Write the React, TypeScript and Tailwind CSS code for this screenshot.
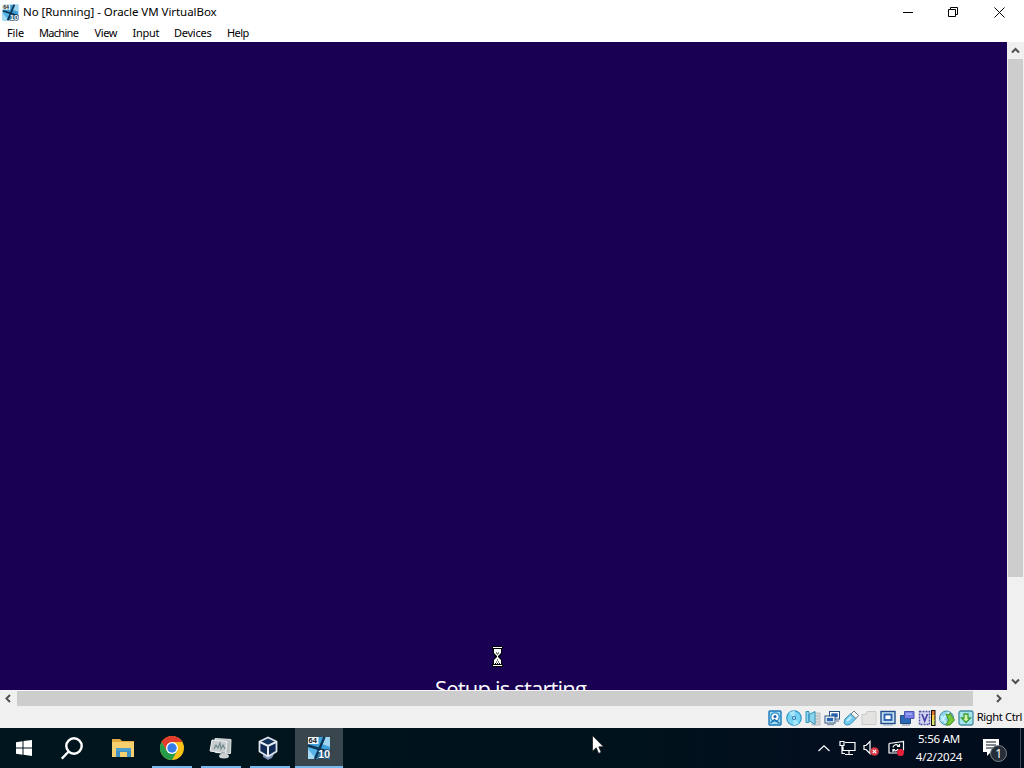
import React from 'react';

const menuItems = [
  { label: 'File', box: 'w-[32px] tracking-[-0.1px]' },
  { label: 'Machine', box: 'w-[55.5px] tracking-[-0.7px]' },
  { label: 'View', box: 'w-[38px] tracking-[-0.4px]' },
  { label: 'Input', box: 'w-[41.5px] tracking-[-0.3px]' },
  { label: 'Devices', box: 'w-[53px] tracking-[-0.25px]' },
  { label: 'Help', box: 'w-[40px] tracking-[-0.55px]' },
];

const VmIcon = ({ size }: { size: number }) => (
  <svg width={size} height={size} viewBox="0 0 24 24" className="shrink-0">
    <rect x="1" y="1" width="22" height="22" fill="#3d9ed8" />
    <path d="M1 11l10 3-4 9H1z" fill="#58b4e6" />
    <path d="M1 13l8 10H1z" fill="#a5dbf5" />
    <path d="M17 1h6v10l-8-3z" fill="#9fd4ee" />
    <path d="M17.5 1L8 23M1 9.5l22 7" stroke="#0d3353" strokeWidth="2.4" fill="none" />
    <rect x="1" y="1" width="10.5" height="7" fill="#eef3f4" />
    <text x="1.6" y="7.3" fontSize="7.5" fontWeight="700" fontFamily="Liberation Sans" fill="#172127">64</text>
    <text x="11" y="22" fontSize="11" fontWeight="700" fontFamily="Liberation Sans" fill="#fff" stroke="#173b55" strokeWidth="1.6" paintOrder="stroke">10</text>
  </svg>
);

const Chevron = ({ d }: { d: string }) => (
  <svg width="9" height="9" viewBox="0 0 9 9" fill="none" stroke="#505050" strokeWidth="2">
    <path d={d} />
  </svg>
);

const StatusIcons = () => (
  <>
    {/* Hard disk */}
    <svg width="16" height="16" viewBox="0 0 16 16">
      <rect x="2" y="1" width="12" height="14" rx="1" fill="#9edcf6" stroke="#1877b7" strokeWidth="1.4" />
      <circle cx="8" cy="7" r="4.2" fill="#fff" stroke="#2a8fca" strokeWidth="1.3" />
      <circle cx="8" cy="6.5" r="1.5" fill="#1c5fae" />
      <path d="M3.5 13l4-3.5 5 4" stroke="#1764a5" strokeWidth="1.3" fill="none" />
    </svg>
    {/* Optical disc */}
    <svg width="16" height="16" viewBox="0 0 16 16">
      <circle cx="8" cy="8" r="7.2" fill="#78d4f5" stroke="#2d95c5" strokeWidth="1.2" />
      <path d="M8 8L3 3a7 7 0 0 1 6-2zM8 8l5 5a7 7 0 0 1-6 2z" fill="#a8e7fa" />
      <circle cx="8" cy="8" r="1.5" fill="#fff" stroke="#2475b0" strokeWidth="1.2" />
    </svg>
    {/* Audio */}
    <svg width="16" height="16" viewBox="0 0 16 16">
      <path d="M8 3h7v12H7z" fill="#dadcdd" stroke="#b9bcbe" />
      <path d="M10 6h4M10 9h4M10 12h4" stroke="#b5b9bb" />
      <path d="M1 1.5h3v11H1zM4 4.5l6-3v13l-6-4z" fill="#8bd5ee" stroke="#3292b9" />
    </svg>
    {/* Network */}
    <svg width="16" height="16" viewBox="0 0 16 16">
      <rect x="5.5" y="1.5" width="10" height="7.5" fill="#fff" stroke="#24517e" />
      <rect x="7.3" y="3.3" width="6.4" height="4" fill="#2663b0" />
      <rect x="1" y="6" width="10" height="7" fill="#fff" stroke="#24517e" />
      <rect x="2.8" y="7.8" width="6.4" height="3.5" fill="#2663b0" />
      <path d="M3 14.5h7M12 11h3" stroke="#8597a8" strokeWidth="1.3" />
    </svg>
    {/* USB */}
    <svg width="16" height="16" viewBox="0 0 16 16">
      <path d="M8 3.5l5 5-6 6-4 .5L1 13l1-4z" fill="#72c9ee" stroke="#318fbd" />
      <path d="M8 4l3-3 4.5 4.5L13 8.5z" fill="#f0f5f5" stroke="#697d86" />
      <path d="M4 11l4-4" stroke="#c4effa" strokeWidth="2.2" />
    </svg>
    {/* Shared folders */}
    <svg width="16" height="16" viewBox="0 0 16 16">
      <path d="M1 14.5v-10h4l1-3h9v13z" fill="#e4e3e2" stroke="#cac9c8" />
    </svg>
    {/* Display */}
    <svg width="16" height="16" viewBox="0 0 16 16">
      <rect x="1" y="1.5" width="14" height="12" fill="#c4e2f3" stroke="#244d8b" strokeWidth="1.4" />
      <rect x="4.5" y="4.5" width="7" height="5.5" fill="#fff" stroke="#255eac" strokeWidth="1.8" />
      <path d="M3 15h10" stroke="#8ba4b5" />
    </svg>
    {/* Recording */}
    <svg width="16" height="16" viewBox="0 0 16 16">
      <path d="M1.5 5.5h10v8h-10z" fill="#2a69b5" stroke="#214b7d" />
      <path d="M5.5 1.5h9.5v7H5.5z" fill="#7780e4" stroke="#4b52af" />
      <path d="M7 3h6v2H7z" fill="#9ba3f2" />
      <path d="M3 15h8" stroke="#8392a3" />
    </svg>
    {/* Processor features */}
    <svg width="18" height="16" viewBox="0 0 18 16">
      <rect x="1.5" y="1.5" width="10" height="13" fill="#d3d4f4" stroke="#5156a2" strokeWidth="1.5" strokeDasharray="2 1" />
      <path d="M4 4l2.7 7L9.5 4" stroke="#4040a0" strokeWidth="1.6" fill="none" />
      <rect x="13" y="0" width="4.5" height="16" fill="#111" />
      <path d="M14 1h2.5v5H14z" fill="#e8732d" />
      <path d="M14 5h2.5v6H14z" fill="#f7ce44" />
      <path d="M14 10h2.5v5H14z" fill="#d9e66c" />
    </svg>
    {/* Mouse integration */}
    <svg width="16" height="16" viewBox="0 0 16 16">
      <circle cx="7.5" cy="8" r="7" fill="#8bd5ef" stroke="#438ca7" />
      <path d="M2 11l8-9M2 6l5 7" stroke="#c9f1fb" strokeWidth="2" />
      <path d="M7 4l3 1 1-2 4.5 7-4.5 5H7l2.5-5z" fill="#75c73c" stroke="#488f27" />
    </svg>
    {/* Keyboard capture */}
    <svg width="16" height="16" viewBox="0 0 16 16">
      <rect x="1" y="1" width="14" height="14" rx="2" fill="#a4e5ed" stroke="#428ca4" strokeWidth="1.3" />
      <path d="M6 4h4v4h2.5L8 12.5 3.5 8H6z" fill="#d7f5a4" stroke="#3b9a3a" strokeWidth="1.3" />
    </svg>
  </>
);

const TaskButton = ({ children, open, active }: { children: React.ReactNode; open?: boolean; active?: boolean }) => (
  <div className={`relative flex h-10 items-center justify-center ${active ? 'w-12 bg-[#39464e]' : 'w-[49px]'}`}>
    {children}
    {open && <span className={`absolute bottom-0 h-[2px] bg-[#76b9ed] ${active ? 'inset-x-0' : 'inset-x-[4.5px]'}`} />}
  </div>
);

const App: React.FC = () => {
  return (
    <div className="flex h-[768px] w-[1024px] flex-col overflow-hidden bg-[#f0f0f0] font-['Noto_Sans',sans-serif] text-black">
      {/* Title bar */}
      <header className="flex h-6 shrink-0 items-center bg-white pl-[2px]">
        <VmIcon size={17} />
        <span className="ml-1 text-[11.5px] tracking-[-0.05px] whitespace-nowrap">No [Running] - Oracle VM VirtualBox</span>
        <div className="mr-px ml-auto flex h-[21px] items-center">
          <div className="flex w-[45px] justify-center">
            <svg width="10" height="10"><path d="M0 5.5h10" stroke="#000" /></svg>
          </div>
          <div className="flex w-[46px] justify-center">
            <svg width="10" height="10" fill="none" stroke="#000"><path d="M.5 2.5h7v7h-7zM2.5 2.5v-2h7v7h-2" /></svg>
          </div>
          <div className="flex w-[47px] justify-center">
            <svg width="11" height="11" stroke="#000"><path d="M.5.5l10 10M10.5.5l-10 10" /></svg>
          </div>
        </div>
      </header>

      {/* Menu bar */}
      <nav className="flex h-[18px] shrink-0 bg-white pl-[7px] text-[11px] leading-[18px]">
        {menuItems.map((item) => (
          <span key={item.label} className={`${item.box} shrink-0 whitespace-nowrap`}>{item.label}</span>
        ))}
      </nav>

      {/* Guest screen */}
      <div className="flex h-[648px] shrink-0">
        <main className="flex w-[1007px] flex-col overflow-hidden bg-[#190052]">
          <svg width="11" height="21" viewBox="0 0 11 21" className="mt-[604px] ml-[492px] shrink-0">
            <path d="M0 0h11v3H10v5L7 10.5l3 3V18h1v3H0v-3h1v-4.5l3-3L1 8V3H0z" fill="#000" />
            <path d="M1 1h9v1H1zM2 3h7v4L6 10v1l3 3v4H2v-4l3-3v-1L2 7zM1 19h9v1H1z" fill="#fff" />
            <path d="M4 7h1M6 7h1M5 8h1M5 14h1M4 16h1M6 16h1M3 17.5h1M5 17.5h1M7 17.5h1" stroke="#000" />
          </svg>
          <p className="mt-[6px] ml-[435px] font-['Open_Sans',sans-serif] text-[22px] leading-[30px] tracking-[-0.82px] whitespace-nowrap text-white">Setup is starting</p>
        </main>
        <div className="flex w-[17px] flex-col items-center">
          <div className="flex h-[17px] items-center"><Chevron d="M1 6.5L4.5 3 8 6.5" /></div>
          <div className="h-[518px] w-[15px] bg-[#cdcdcd]" />
          <div className="mt-auto flex h-[17px] items-center"><Chevron d="M1 2.5L4.5 6 8 2.5" /></div>
        </div>
      </div>

      {/* Horizontal scrollbar */}
      <div className="flex h-[17px] w-[1007px] shrink-0 items-start border-t border-[#f7f5f7]">
        <div className="flex h-[15px] w-[17px] items-center justify-center"><Chevron d="M6 1L2.5 4.5 6 8" /></div>
        <div className="h-[15px] w-[956px] bg-[#cdcdcd]" />
        <div className="ml-auto flex h-[15px] w-[17px] items-center justify-center"><Chevron d="M3 1l3.5 3.5L3 8" /></div>
      </div>

      {/* Status bar */}
      <div className="flex h-[21px] shrink-0 items-center justify-end gap-[2.9px] pr-[2px]">
        <StatusIcons />
        <span className="text-[11.2px] tracking-[-0.4px] whitespace-nowrap">Right Ctrl</span>
      </div>

      {/* Taskbar */}
      <footer className="flex h-10 shrink-0 bg-[linear-gradient(90deg,#00151d,#00131c_60%,#030e1e_80%,#000b1b)] text-white">
        <TaskButton>
          <svg width="16" height="16" fill="#fff" className="mr-px"><path d="M0 2.3l6.5-1v6.2H0zM7.5 1.1L16 0v7.5H7.5zM0 8.5h6.5v6.2l-6.5-1zM7.5 8.5H16V16l-8.5-1.2z" /></svg>
        </TaskButton>
        <TaskButton>
          <svg width="22" height="23" fill="none" stroke="#fff" strokeWidth="2.4" className="mr-[3px]"><circle cx="13" cy="9" r="7.7" /><path d="M7.7 14.5L.8 21.7" /></svg>
        </TaskButton>
        <TaskButton>
          <svg width="22" height="20" viewBox="0 0 22 20">
            <path d="M0 1h8l2 2h12v16H0z" fill="#e0a83f" />
            <path d="M0 4h22v15H0z" fill="#f6d06f" />
            <path d="M4 10h15v9h-4v-5H8v5H4z" fill="#3f8fc0" />
            <path d="M4 10h15v3H4z" fill="#4b9fce" />
          </svg>
        </TaskButton>
        <TaskButton open>
          <svg width="24" height="24" viewBox="0 0 24 24">
            <circle cx="12" cy="12" r="12" fill="#fbc116" />
            <path d="M12 6h10.4A12 12 0 0 0 1.6 6L6.8 15z" fill="#e33b2e" />
            <path d="M1.6 6A12 12 0 0 0 12 24l5.2-9H6.8z" fill="#269c4b" />
            <circle cx="12" cy="12" r="6" fill="#fff" />
            <circle cx="12" cy="12" r="4.7" fill="#347de9" />
          </svg>
        </TaskButton>
        <TaskButton open>
          <svg width="24" height="22" viewBox="0 0 24 22">
            <path d="M6 1.5l16 1-.5 14-15-1z" fill="#b9c0c2" stroke="#e4e8e8" />
            <path d="M3 3l15 1.5-1.5 12L1 14z" fill="#c6cccd" stroke="#f1f4f4" />
            <path d="M5 12l2-4 2 3 2-5 1 6 2-4 2 4" fill="none" stroke="#6d878c" strokeWidth="1.1" />
            <path d="M12 15h4v3h-4z" fill="#adb5b8" />
            <ellipse cx="15" cy="19" rx="5" ry="2.5" fill="#cbd0d1" />
          </svg>
        </TaskButton>
        <TaskButton open>
          <svg width="20" height="24" viewBox="0 0 20 24" className="mr-[3px]">
            <path d="M5 17l5-2 6 3-2 4-4 2-5-3z" fill="#7a8db2" />
            <path d="M1.5 5.5L10 1.5l8.5 4v10L10 20.5l-8.5-5z" fill="#102a54" stroke="#dce4ed" strokeWidth="1.8" />
            <path d="M2 6l8 4 8-4M10 10v10" fill="none" stroke="#e8edf2" strokeWidth="2" />
            <path d="M5 5.5l5-2 5 2-5 2z" fill="#13345f" />
          </svg>
        </TaskButton>
        <div className="ml-px"><TaskButton open active><VmIcon size={24} /></TaskButton></div>

        {/* Notification area */}
        <div className="ml-auto flex items-center">
          <svg width="12" height="7" fill="none" stroke="#fff" strokeWidth="1.2" className="mr-[9px]"><path d="M.5 6L6 .8 11.5 6" /></svg>
          <svg width="17" height="16" fill="none" stroke="#fff" strokeWidth="1.2" className="mr-[7px]">
            <path d="M6 2.5h10v8H4v-4M10 11v3M6 14.5h8M1 1.5h4v4H1zM3 5.5v8h3" />
          </svg>
          <svg width="17" height="16" className="mr-[8px]">
            <path d="M1 5.5h2l4-4v12l-4-4H1z" fill="none" stroke="#fff" strokeWidth="1.2" />
            <circle cx="11.5" cy="11.5" r="4.3" fill="#dc3545" />
            <path d="M9.8 9.8l3.4 3.4M13.2 9.8l-3.4 3.4" stroke="#fff" strokeWidth="1.2" />
          </svg>
          <svg width="17" height="17" fill="none" stroke="#fff" strokeWidth="1.2" className="mr-[10px]">
            <path d="M1 3.5l14.5-2v9M1 3.5v9.500h8" />
            <path d="M5 7.500a3 3 0 0 1 5-2l1 1M11.500 4v2.500H9M10 9a3 3 0 0 1-4 1.500l-1-1M5 12V9.500h2" />
            <circle cx="12.500" cy="12.500" r="3.500" fill="#e52039" stroke="none" />
          </svg>
          <div className="w-[48px] text-center text-[11.5px] leading-[18px] tracking-[-0.2px] whitespace-nowrap">
            <div>5:56 AM</div>
            <div>4/2/2024</div>
          </div>
          <svg width="26" height="26" viewBox="0 0 26 26" className="mt-1 ml-[20px]">
            <path d="M0 2h16v13H8l-4 4v-4H0z" fill="#fff" />
            <path d="M3 5h10M3 8h10M3 11h7" stroke="#07131f" strokeWidth="1.2" />
            <circle cx="15.5" cy="16.5" r="8" fill="#252e38" stroke="#7b8289" />
            <text x="12.2" y="21" fontSize="12" fontFamily="Noto Sans" fill="#fff">1</text>
          </svg>
          <span className="ml-[11px] h-10 w-px bg-[#3e4852]" />
          <span className="w-[3px]" />
        </div>
      </footer>

      {/* Host pointer */}
      <svg width="12" height="19" viewBox="0 0 12 19" className="absolute top-[735px] left-[592px]">
        <path d="M.5.5v15.800l3.700-3.500 2.400 5.600 2.600-1.100-2.400-5.500h4.700z" fill="#fff" stroke="#111" strokeWidth=".7" />
      </svg>
    </div>
  );
};

export default App;
